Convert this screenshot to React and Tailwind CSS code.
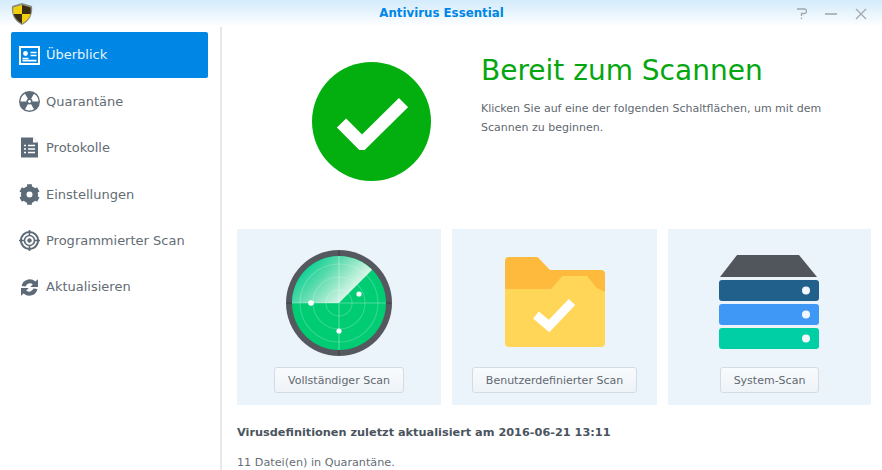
import React from 'react';

const Shield = () => (
  <svg width="24" height="24" viewBox="0 0 24 24" className="-ml-[6px]">
    <path d="M12 1 L22 4 C23 12 20 19 12 23 C4 19 1 12 2 4 Z" fill="#8b8f80" />
    <path d="M12 3 L12 12 L3.6 12 C3.2 10 3.2 7.5 3.4 5.5 Z" fill="#f2cf0c" />
    <path d="M12 3 L20.6 5.5 C20.8 7.5 20.8 10 20.4 12 L12 12 Z" fill="#3a2c14" />
    <path d="M3.6 12 L12 12 L12 21.5 C7.5 19 4.6 16 3.6 12 Z" fill="#3a2c14" />
    <path d="M12 12 L20.4 12 C19.4 16 16.5 19 12 21.5 Z" fill="#f2cf0c" />
  </svg>
);

const OverviewIcon = () => (
  <svg width="21" height="21" viewBox="0 0 21 21">
    <rect x="1" y="2" width="19" height="17" fill="none" stroke="#fff" strokeWidth="2" />
    <circle cx="6.5" cy="8.5" r="2.4" fill="#fff" />
    <path d="M3.5 13.5 h6 M11.5 7.5 h6 M11.5 10.5 h6 M3.5 15.6 h14" stroke="#fff" strokeWidth="1.6" />
  </svg>
);

const RadiationIcon = () => (
  <svg width="21" height="21" viewBox="0 0 21 21">
    <circle cx="10.5" cy="10.5" r="10.5" fill="#5d6a78" />
    <path d="M10.5 10.5 L15 18.3 A9 9 0 0 1 6 18.3 Z" fill="#fff" />
    <path d="M10.5 10.5 L15 2.7 A9 9 0 0 1 19.5 10.5 Z" fill="#fff" />
    <path d="M10.5 10.5 L1.5 10.5 A9 9 0 0 1 6 2.7 Z" fill="#fff" />
    <circle cx="10.5" cy="10.5" r="3" fill="#5d6a78" />
    <circle cx="10.5" cy="10.5" r="1.4" fill="#fff" />
  </svg>
);

const LogIcon = () => (
  <svg width="21" height="21" viewBox="0 0 21 21">
    <path d="M2 0.5 h12 l5 5 v15 h-17 Z" fill="#5d6a78" />
    <path d="M14 0.5 v5 h5 Z" fill="#fff" />
    <path d="M9 8.5 h7 M9 12 h7 M9 15.5 h7 M5 8.5 h2 M5 12 h2 M5 15.5 h2" stroke="#fff" strokeWidth="1.5" />
  </svg>
);

const GearIcon = () => (
  <svg width="21" height="21" viewBox="0 0 21 21">
    <circle cx="10.5" cy="10.5" r="5.8" fill="none" stroke="#5d6a78" strokeWidth="5.6" />
    <g stroke="#5d6a78" strokeWidth="4.8">
      <path d="M10.5 0.3 v4 M10.5 16.7 v4" />
      <path d="M1.7 5.4 l3.5 2 M15.8 13.6 l3.5 2" />
      <path d="M1.7 15.6 l3.5 -2 M15.8 7.4 l3.5 -2" />
    </g>
  </svg>
);

const TargetIcon = () => (
  <svg width="21" height="21" viewBox="0 0 21 21" fill="none" stroke="#5d6a78">
    <circle cx="10.5" cy="10.5" r="8.6" strokeWidth="2" />
    <circle cx="10.5" cy="10.5" r="5" strokeWidth="1.6" />
    <circle cx="10.5" cy="10.5" r="1.8" fill="#5d6a78" strokeWidth="1" />
    <path d="M10.5 0 v5 M10.5 16 v5 M0 10.5 h5 M16 10.5 h5" strokeWidth="1.6" />
  </svg>
);

const RefreshIcon = () => (
  <svg width="21" height="21" viewBox="0 0 21 21" fill="#5d6a78">
    <path d="M2.6 9 A8.2 8.2 0 0 1 16.4 4.6 L19 2.2 V10 H11.2 L13.8 7.4 A4.6 4.6 0 0 0 6.6 9.4 Z" />
    <path d="M18.4 12 A8.2 8.2 0 0 1 4.6 16.4 L2 18.8 V11 H9.8 L7.2 13.6 A4.6 4.6 0 0 0 14.4 11.6 Z" />
  </svg>
);

const RadarIcon = () => (
  <svg width="106" height="106" viewBox="0 0 106 106" className="mt-px">
    <defs>
      <linearGradient id="sweep" gradientUnits="userSpaceOnUse" x1="62" y1="44" x2="24" y2="8">
        <stop offset="0" stopColor="#d6f5e6" />
        <stop offset="0.6" stopColor="#55daab" />
        <stop offset="1" stopColor="#00cf90" />
      </linearGradient>
    </defs>
    <circle cx="53" cy="53" r="53" fill="#55585e" />
    <circle cx="53" cy="53" r="47" fill="#00cc74" />
    <path d="M53 53 L86.2 19.8 A47 47 0 0 0 6 53 Z" fill="url(#sweep)" />
    <g fill="none" stroke="#ffffff" strokeOpacity="0.2" strokeWidth="1.2">
      <circle cx="53" cy="53" r="13" />
      <circle cx="53" cy="53" r="26" />
      <circle cx="53" cy="53" r="39" />
    </g>
    <path d="M53 6 V100 M6 53 H100" stroke="#ffffff" strokeOpacity="0.3" strokeWidth="1.2" />
    <path d="M53 1 V6 M53 100 V105 M1 53 H6 M100 53 H105" stroke="#3b3e43" strokeWidth="1" />
    <circle cx="25" cy="53" r="2.8" fill="#fff" />
    <circle cx="73" cy="44" r="2.6" fill="#fff" />
    <circle cx="53" cy="81" r="2.6" fill="#fff" />
  </svg>
);

const FolderIcon = () => (
  <svg width="100" height="90" viewBox="0 0 100 90">
    <path d="M0 4 a4 4 0 0 1 4 -4 H31 a3 3 0 0 1 3 1.5 L45 13 H96 a4 4 0 0 1 4 4 V40 H0 Z" fill="#fdba3c" />
    <path d="M0 32 H46 L56 20.5 a3 3 0 0 1 2 -1.5 H82 L92 31 L100 35 V86 a4 4 0 0 1 -4 4 H4 a4 4 0 0 1 -4 -4 Z" fill="#ffd657" />
    <path d="M31 58 L44 69 L67 45" fill="none" stroke="#fff" strokeWidth="9" />
  </svg>
);

const ServerIcon = () => (
  <svg width="100" height="95" viewBox="0 0 100 95" className="mr-[2px]">
    <path d="M18 0 H80 L98 22 H1 Z" fill="#50565c" />
    <rect x="0" y="25" width="100" height="21" rx="3" fill="#22608c" />
    <circle cx="87" cy="35.5" r="4" fill="#f2f7fc" />
    <rect x="0" y="49" width="100" height="21" rx="3" fill="#3f97f6" />
    <circle cx="87" cy="59.5" r="4" fill="#f2f7fc" />
    <rect x="0" y="73" width="100" height="21" rx="3" fill="#00cfa5" />
    <circle cx="87" cy="83.5" r="4" fill="#f2f7fc" />
  </svg>
);

const navItems = [
  { label: 'Überblick', icon: OverviewIcon, active: true },
  { label: 'Quarantäne', icon: RadiationIcon },
  { label: 'Protokolle', icon: LogIcon },
  { label: 'Einstellungen', icon: GearIcon },
  { label: 'Programmierter Scan', icon: TargetIcon },
  { label: 'Aktualisieren', icon: RefreshIcon },
];

const ScanCard = ({ icon, label }) => (
  <div className="h-[176px] flex flex-col items-center bg-[#ecf4fb]">
    <div className="h-[138px] flex items-center justify-center pt-[8px]">{icon}</div>
    <button className="h-[26px] px-[13px] pt-[2px] rounded-[3px] border border-[#d3dbe3] bg-gradient-to-b from-[#f9fbfd] to-[#eef3f8] text-[11px] text-[#5f6870]">
      {label}
    </button>
  </div>
);

export default function App() {
  return (
    <div className="w-[882px] h-[470px] overflow-hidden bg-white flex flex-col font-['DejaVu_Sans',sans-serif]">
      {/* title bar */}
      <div className="h-[27px] shrink-0 flex items-center bg-gradient-to-b from-[#d3ebfb] to-[#ffffff] pl-[16px] pr-[15px]">
        <div className="flex-1">
          <Shield />
        </div>
        <div className="text-[11.8px] font-bold text-[#0086e5]">Antivirus Essential</div>
        <div className="flex-1 flex items-center justify-end gap-[18px]">
          <svg width="10" height="12" viewBox="0 0 10 12" fill="none" stroke="#a3a8ad" strokeWidth="1.3">
            <path d="M0 1 H7.5 Q9.5 1 9.5 3.2 Q9.5 5.5 7.5 5.5 H4.5 V8" />
            <path d="M4.5 9.6 V11.2" />
          </svg>
          <svg width="12" height="12" viewBox="0 0 12 12"><path d="M0 6 H12" stroke="#a3a8ad" strokeWidth="1.6" /></svg>
          <svg width="12" height="12" viewBox="0 0 12 12"><path d="M1 1 L11 11 M11 1 L1 11" stroke="#a3a8ad" strokeWidth="1.3" /></svg>
        </div>
      </div>

      <div className="flex-1 flex">
        {/* sidebar */}
        <div className="w-[222px] shrink-0 border-r-2 border-[#e6e8ea] pt-[5px] pl-[11px] pr-[12px]">
          {navItems.map((item) => (
            <div
              key={item.label}
              className={`h-[46.4px] flex items-center gap-[6px] pl-[8px] rounded-[2px] text-[13px] ${item.active ? 'bg-[#0086e5] text-[#e4f5ff]' : 'text-[#646c74]'}`}
            >
              <item.icon />
              <span>{item.label}</span>
            </div>
          ))}
        </div>

        <div className="flex-1 pl-[15px] pr-[11px]">
          <div className="h-[202px] flex">
            <div className="w-[244px] shrink-0 pt-[35px]">
              <div className="w-[119px] h-[119px] ml-[75px] rounded-full bg-[#03af0f] flex items-center justify-center">
                <svg width="72" height="56" viewBox="0 0 72 56">
                  <path d="M5.5 29 L26 49.5 L67.5 8.5" fill="none" stroke="#fff" strokeWidth="13" />
                </svg>
              </div>
            </div>
            <div className="pt-[25px]">
              <h1 className="text-[28px] leading-[38px] text-[#04a60f]">Bereit zum Scannen</h1>
              <p className="mt-[9px] text-[11px] leading-[19px] text-[#5f6870] w-[350px]">
                Klicken Sie auf eine der folgenden Schaltflächen, um mit dem Scannen zu beginnen.
              </p>
            </div>
          </div>

          <div className="grid grid-cols-[204px_205px_203px] gap-[11px]">
            <ScanCard icon={<RadarIcon />} label="Vollständiger Scan" />
            <ScanCard icon={<FolderIcon />} label="Benutzerdefinierter Scan" />
            <ScanCard icon={<ServerIcon />} label="System-Scan" />
          </div>

          <div className="mt-[20px] text-[11.3px] font-bold text-[#4a545e]">
            Virusdefinitionen zuletzt aktualisiert am 2016-06-21 13:11
          </div>
          <div className="mt-[13px] text-[11.2px] text-[#666e76]">11 Datei(en) in Quarantäne.</div>
        </div>
      </div>
    </div>
  );
}
